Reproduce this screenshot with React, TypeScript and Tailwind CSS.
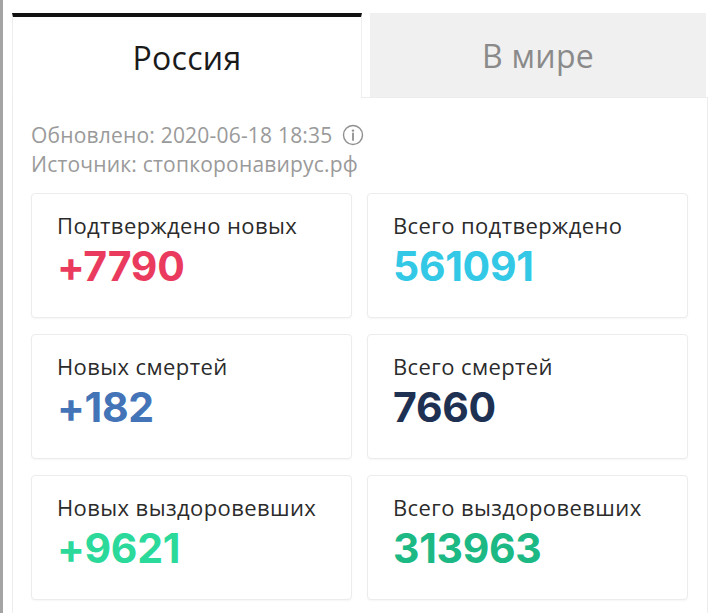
import React from "react";

type Stat = { label: string; value: string; color: string };

const STATS: Stat[] = [
  { label: "Подтверждено новых", value: "+7790", color: "text-[#ea3a5d]" },
  { label: "Всего подтверждено", value: "561091", color: "text-[#33c9e6]" },
  { label: "Новых смертей", value: "+182", color: "text-[#4474b8]" },
  { label: "Всего смертей", value: "7660", color: "text-[#1e3152]" },
  { label: "Новых выздоровевших", value: "+9621", color: "text-[#2bd99b]" },
  { label: "Всего выздоровевших", value: "313963", color: "text-[#1cb985]" },
];

function StatCard({ stat }: { stat: Stat }) {
  return (
    <div className="h-[125px] rounded-[4px] border border-[#ececec] bg-white pl-[25px] pt-[15px] shadow-[0_1px_2px_rgba(0,0,0,0.04)]">
      <div className="text-[22px] leading-[32px] tracking-[0.4px] text-[#2b2b2b] font-['Open_Sans',sans-serif]">{stat.label}</div>
      <div className={`mt-[2px] text-[41px] leading-[46px] font-bold tracking-[-0.3px] font-['Inter',sans-serif] ${stat.color}`}>
        {stat.value}
      </div>
    </div>
  );
}

function InfoIcon() {
  return (
    <svg width="22" height="22" viewBox="0 0 22 22" className="inline-block ml-[10px] -mt-[4px]" fill="none">
      <circle cx="11" cy="11" r="9.5" stroke="#8f8f8f" strokeWidth="1.4" />
      <circle cx="11" cy="6.6" r="1.2" fill="#8f8f8f" />
      <path d="M11 9.5v6.5" stroke="#8f8f8f" strokeWidth="1.8" strokeLinecap="round" />
    </svg>
  );
}

export default function App() {
  return (
    <div className="h-[613px] w-[720px] overflow-hidden border-l-[3px] border-[#a4a4a4] bg-white font-['Open_Sans',sans-serif]">
      <div className="ml-[9px] w-[696px] pt-[13px]">
        {/* Tabs */}
        <div className="relative z-10 flex gap-[8px]">
          <div className="-mb-px flex h-[85px] w-[350px] items-center justify-center border-t-[4px] border-[#111] border-x border-x-[#eeeeee] bg-white text-[32px] tracking-[0.3px] text-[#1a1a1a]">
            Россия
          </div>
          <div className="flex h-[84px] w-[336px] items-center justify-center bg-[#f0f0f0] pt-[2px] text-[32px] tracking-[0.3px] text-[#8a8a8a]">
            В мире
          </div>
        </div>

        {/* Panel */}
        <div className="h-[600px] border border-[#ededed] bg-white pl-[18px] pr-[19px] pt-[23px]">
          <div className="text-[21px] leading-[29px] tracking-[0.2px] text-[#9a9a9a]">
            Обновлено: 2020-06-18 18:35
            <InfoIcon />
          </div>
          <div className="text-[21px] leading-[29px] tracking-[0.2px] text-[#9a9a9a]">Источник: стопкоронавирус.рф</div>

          <div className="mt-[14px] grid grid-cols-2 gap-x-[15px] gap-y-[16px]">
            {STATS.map((s) => (
              <StatCard key={s.label} stat={s} />
            ))}
          </div>
        </div>
      </div>
    </div>
  );
}
